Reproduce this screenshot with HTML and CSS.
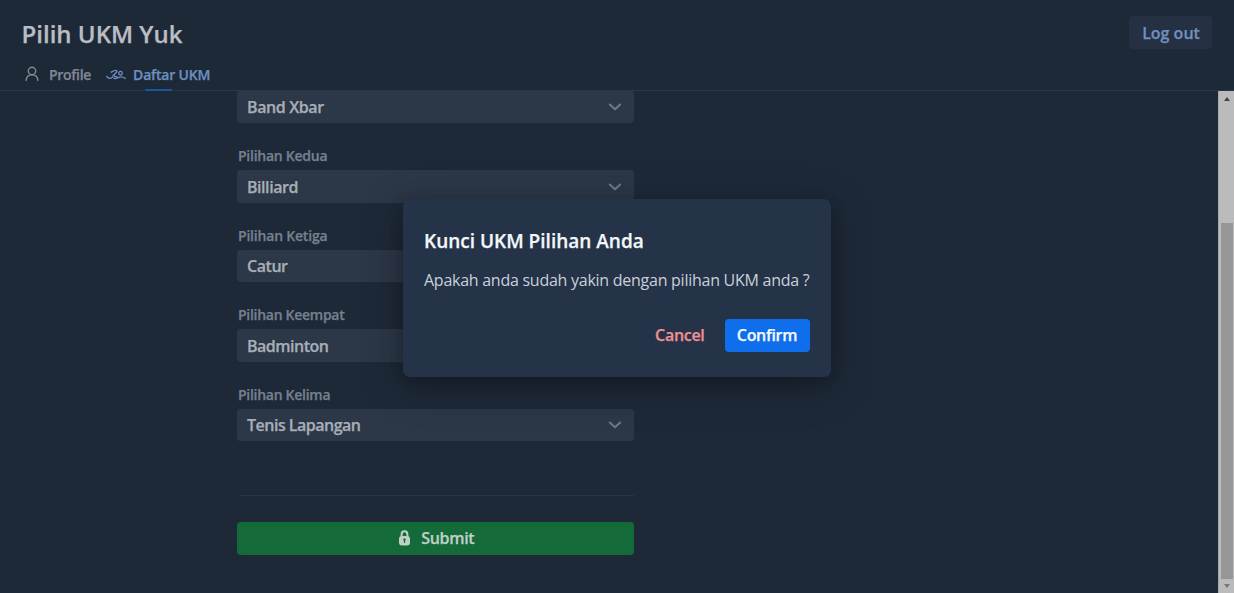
FILE: index.html
```html
<!DOCTYPE html>
<html lang="id">
<head>
<meta charset="utf-8">
<title>Pilih UKM Yuk</title>
<link rel="stylesheet" href="styles.css">
</head>
<body>
<header class="header">
  <div class="topbar">
    <h1 class="brand">Pilih UKM Yuk</h1>
    <button class="logout">Log out</button>
  </div>
  <nav class="tabs">
    <a class="tab">
      <svg class="icon-user" viewBox="0 0 14 16"><circle cx="7" cy="5" r="3.700"/><path d="M1.200 14.600c.1-3.500 2.300-5.900 5.800-5.900s5.700 2.400 5.800 5.900"/></svg>
      <span class="profile">Profile</span>
    </a>
    <a class="tab active">
      <svg class="icon-swim" viewBox="0 0 20 11"><circle cx="14.500" cy="4.200" r="1.800"/><path d="M5.200 3.100 8.600 1.500c1.700-.6 2.900.7 1.700 2L7 6.700l4.200 1.500M.8 7.500c1.900 2.400 4.200 2.200 6 .6M8 9.300c2.500.7 3.500-.2 5-.9 2.200-1 4-.5 6.200 1"/></svg>
      <span class="daftar">Daftar UKM</span>
    </a>
  </nav>
</header>
<div class="body">
  <main class="content">
    <form class="form">
      <div class="select"><span class="v1">Band Xbar</span><svg class="chevron" viewBox="0 0 14 8"><path d="M1.800 1.500 7 6.300l5.200-4.800"/></svg></div>
      <label class="label l2">Pilihan Kedua</label>
      <div class="select"><span class="v2">Billiard</span><svg class="chevron" viewBox="0 0 14 8"><path d="M1.800 1.500 7 6.300l5.200-4.800"/></svg></div>
      <label class="label l3">Pilihan Ketiga</label>
      <div class="select"><span class="v3">Catur</span><svg class="chevron" viewBox="0 0 14 8"><path d="M1.800 1.500 7 6.300l5.200-4.800"/></svg></div>
      <label class="label l4">Pilihan Keempat</label>
      <div class="select"><span class="v4">Badminton</span><svg class="chevron" viewBox="0 0 14 8"><path d="M1.800 1.500 7 6.300l5.200-4.800"/></svg></div>
      <label class="label l5">Pilihan Kelima</label>
      <div class="select"><span class="v5">Tenis Lapangan</span><svg class="chevron" viewBox="0 0 14 8"><path d="M1.800 1.500 7 6.300l5.200-4.800"/></svg></div>
      <hr class="divider">
      <button type="button" class="submit">
        <svg class="icon-lock" viewBox="0 0 11 16"><path class="shackle" d="M2.600 7V4.200a2.900 2.900 0 0 1 5.800 0V7"/><rect x="0" y="6" width="11" height="9.500" rx="3"/><path class="keyhole" d="M5.500 9.200v3.200"/><circle class="hole" cx="5.500" cy="9.600" r="1.200"/></svg>
        <span>Submit</span>
      </button>
    </form>
  </main>
  <div class="scrollbar"><i class="up"></i><i class="thumb"></i><i class="down"></i></div>
</div>
<section class="dialog" role="dialog">
  <h2 class="title">Kunci UKM Pilihan Anda</h2>
  <p class="message">Apakah anda sudah yakin dengan pilihan UKM anda ?</p>
  <div class="actions">
    <button class="cancel">Cancel</button>
    <button class="confirm">Confirm</button>
  </div>
</section>
</body>
</html>
```
FILE: styles.css
```css
* { box-sizing: border-box; }
body {
  margin: 0;
  width: 1234px;
  height: 593px;
  overflow: hidden;
  display: flex;
  flex-direction: column;
  background: #1e2938;
  font-family: "Open Sans", "Noto Sans", sans-serif;
  font-weight: 600;
  -webkit-text-stroke: .25px currentColor;
}
h1, h2, p { margin: 0; white-space: nowrap; }
button { border: 0; padding: 0; font: inherit; white-space: nowrap; }
svg { fill: none; stroke: currentColor; stroke-linecap: round; stroke-linejoin: round; flex: none; }
.header { height: 91px; border-bottom: 1px solid #2b3746; padding: 16px 22px 0; flex: none; }
.topbar { display: flex; justify-content: space-between; height: 43px; }
.brand { font-size: 24px; font-weight: 600; line-height: 36px; color: #babec3; margin-left: -.5px; }
.logout { width: 83px; height: 33px; border-radius: 4px; background: #253043; color: #7091bd; font-size: 16px; padding-left: 1px; }
.tabs { display: flex; gap: 15px; padding-left: 3px; }
.tab { display: flex; align-items: center; position: relative; height: 31px; font-size: 14px; letter-spacing: -.3px; color: #808893; white-space: nowrap; }
.tab.active { color: #6c8fc2; letter-spacing: -.18px; }
.tab.active::after { content: ""; position: absolute; left: 39px; bottom: -1px; width: 27px; height: 2px; border-radius: 1px; background: #1a55a5; }
.icon-user { width: 14px; height: 16px; margin: -1px 10px 0 0; stroke-width: 1.4; }
.icon-swim { width: 20px; height: 11px; margin-right: 7px; stroke-width: 1.3; }
.body { display: flex; flex: 1; min-height: 0; }
.content { flex: 1; padding-left: 236.500px; }
.form { width: 397.500px; }
.select { height: 32.500px; display: flex; align-items: center; justify-content: space-between; padding: 0 12px 0 10.500px; border-radius: 4px; background: #2c3747; color: #a8aeb7; font-size: 16px; letter-spacing: -.5px; }
.select:first-child { height: 32px; border-radius: 2px 2px 4px 4px; }
.v1 { letter-spacing: -.38px; }
.v2, .v3 { letter-spacing: -.45px; }
.select:not(:first-child) { padding-top: .8px; }
.chevron { width: 14px; height: 8px; stroke-width: 2; color: #6f7a88; }
.label { display: block; height: 47px; padding: 20px 0 0 1.500px; font-size: 14px; line-height: 25px; letter-spacing: -.28px; color: #75808f; }
.l2 { letter-spacing: -.25px; }
.l3 { letter-spacing: -.2px; }
.divider { height: 1px; border: 0; background: #293544; margin: 54px 0 25.500px 2px; }
.submit { width: 100%; height: 33px; border-radius: 4px; background: #146a38; color: #bfd1c5; font-size: 16px; letter-spacing: -.3px; display: flex; align-items: center; justify-content: center; gap: 11px; padding-left: 3px; }
.icon-lock { width: 11px; height: 16px; }
.icon-lock rect { fill: currentColor; stroke: none; }
.shackle { stroke-width: 2; }
.keyhole { stroke: #146a38; stroke-width: 1.200; }
.icon-lock .hole { fill: #146a38; stroke: none; }
.scrollbar { width: 16px; background: #bbb; border-left: 1px solid #a5a8ab; display: flex; flex-direction: column; align-items: center; padding: 6px 0 5px; }
.up { border: 3.500px solid transparent; border-top: 0; border-bottom: 4px solid #444; }
.thumb { width: 12px; margin: 122px 0 5px; flex: 1; background: #969696; }
.down { border: 3.500px solid transparent; border-bottom: 0; border-top: 4px solid #777; }
.dialog { position: absolute; left: 403px; top: 199px; width: 428px; height: 178px; border-radius: 7px; background: #243348; padding: 26px 21.500px 0 21px; box-shadow: 0 9px 42px rgba(0, 0, 0, .3), 0 4px 14px rgba(0, 0, 0, .18); }
.title { font-size: 19px; font-weight: 600; line-height: 32px; color: #f4f7fa; }
.message { font-size: 16px; font-weight: 400; line-height: 26px; margin-top: 10px; letter-spacing: -.26px; color: #c9d0d8; -webkit-text-stroke: 0; }
.actions { display: flex; justify-content: flex-end; gap: 20px; margin-top: 26px; height: 33px; font-size: 16px; }
.actions button { letter-spacing: -.3px; padding-bottom: 1px; }
.cancel { background: none; color: #ee8f93; }
.confirm { width: 85px; border-radius: 4px; background: #0e6eeb; color: #f4f8ff; }
```
